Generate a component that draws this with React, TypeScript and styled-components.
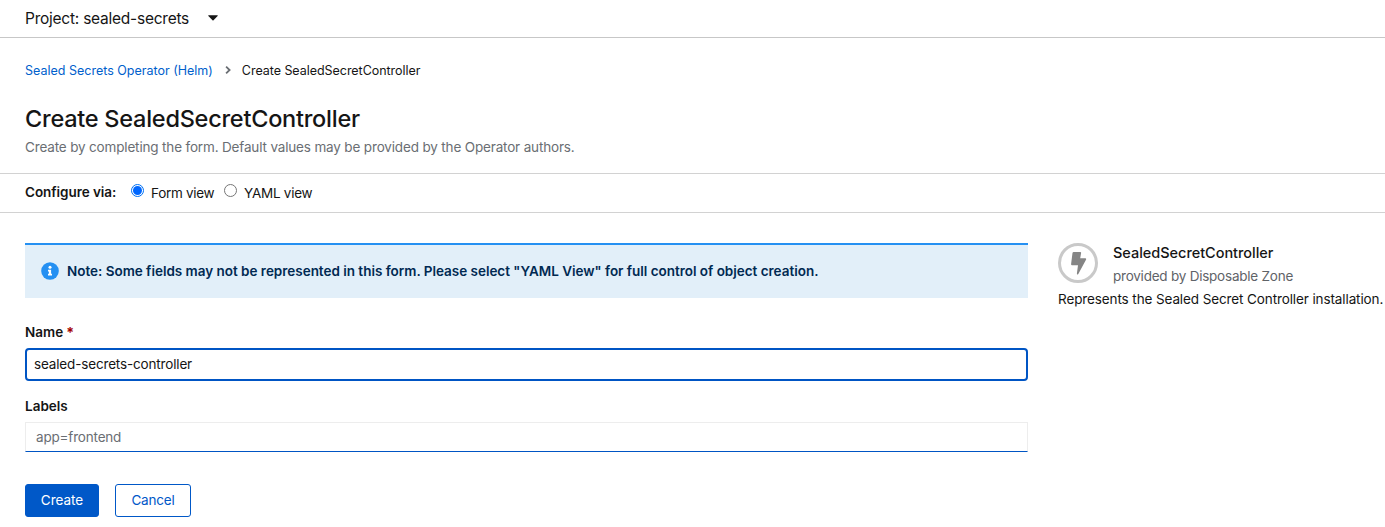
import React from 'react';
import styled, { createGlobalStyle } from 'styled-components';

const GlobalStyle = createGlobalStyle`
  * { box-sizing: border-box; }
  body {
    margin: 0;
    background: #fff;
    color: #151515;
    font-family: Inter, "Liberation Sans", sans-serif;
    font-size: 13.5px;
    line-height: 21px;
    overflow: hidden;
  }
`;

const Page = styled.div`
  height: 527px;
  overflow: hidden;
`;

const ProjectBar = styled.div`
  display: flex;
  align-items: center;
  gap: 19px;
  height: 38px;
  padding: 0 25px 1px;
  border-bottom: 1px solid #c7c7c7;
`;

const Text = styled.span<{ $ls?: number }>`
  white-space: nowrap;
  letter-spacing: ${(p) => p.$ls ?? 0}px;
`;

const ProjectName = styled(Text)`
  font-size: 15.5px;
`;

const Header = styled.header`
  height: 136px;
  padding: 22px 25px 0;
  border-bottom: 1px solid #d2d2d2;
`;

const Breadcrumb = styled.nav`
  display: flex;
  align-items: center;
  height: 20px;
  font-size: 12.5px;
`;

const CrumbLink = styled(Text)`
  color: #0060cc;
`;

const Chevron = styled.svg`
  margin: 0 11px 0 12px;
`;

const Title = styled.h1<{ $ls: number }>`
  margin: 23px 0 0;
  font-size: 23.5px;
  line-height: 31px;
  font-weight: 500;
  letter-spacing: ${(p) => p.$ls}px;
`;

const Subtitle = styled(Text)`
  display: block;
  margin-top: 3px;
  color: #6a6e73;
`;

const ViewSwitch = styled.div`
  display: flex;
  align-items: center;
  height: 39px;
  padding: 0 25px 2px;
  border-bottom: 1px solid #d2d2d2;
`;

const Strong = styled(Text)`
  font-weight: 600;
`;

const SwitchLabel = styled(Strong)`
  width: 106px;
`;

const Option = styled.label<{ $width: number }>`
  display: flex;
  align-items: center;
  gap: 7px;
  width: ${(p) => p.$width}px;
  padding-top: 3px;
`;

const Radio = styled.span<{ $checked?: boolean }>`
  flex: none;
  display: flex;
  align-items: center;
  justify-content: center;
  width: 13px;
  height: 13px;
  margin-bottom: 7px;
  border: 1px solid ${(p) => (p.$checked ? '#0071f2' : '#767676')};
  border-radius: 50%;
  &::after {
    content: '';
    width: 9px;
    height: 9px;
    border-radius: 50%;
    background: ${(p) => (p.$checked ? '#0067ff' : 'transparent')};
  }
`;

const Content = styled.main`
  display: flex;
  gap: 30px;
  padding: 30px 0 0 25px;
`;

const Form = styled.form`
  flex: none;
  width: 1003px;
`;

const Alert = styled.div`
  display: flex;
  align-items: flex-start;
  gap: 8px;
  height: 55px;
  padding: 16px 16px 0;
  border-top: 2px solid #2590f2;
  background: #e2eff9;
  color: #002952;
`;

const InfoIcon = styled.svg`
  margin-top: 1px;
`;

const FieldLabel = styled.div<{ $top: number }>`
  display: flex;
  gap: 3px;
  margin: ${(p) => p.$top}px 0 5px;
`;

const Required = styled.span`
  color: #a30000;
  font-size: 14px;
  font-weight: 700;
`;

const NameInput = styled.div`
  display: flex;
  align-items: center;
  height: 33px;
  padding: 0 7px;
  border: 2px solid #0055c4;
  border-radius: 4px;
`;

const LabelsInput = styled.div`
  display: flex;
  align-items: center;
  height: 30px;
  padding: 1px 10px 0;
  border: 1px solid #ededed;
  border-bottom-color: #0055c4;
  color: #6a6e73;
`;

const Actions = styled.div`
  display: flex;
  gap: 16px;
  margin-top: 32px;
`;

const Button = styled.button<{ $primary?: boolean; $width: number }>`
  width: ${(p) => p.$width}px;
  height: 33px;
  padding: 0;
  border: 1px solid #0058c8;
  border-radius: 3px;
  background: ${(p) => (p.$primary ? '#0058c8' : '#fff')};
  color: ${(p) => (p.$primary ? '#fff' : '#0058c8')};
  font: inherit;
`;

const Aside = styled.aside`
  flex: none;
  width: 327px;
`;

const Provider = styled.div`
  display: flex;
  gap: 15px;
  height: 46px;
`;

const ProviderText = styled.div`
  display: flex;
  flex-direction: column;
  margin-top: -1px;
`;

const KindName = styled(Text)`
  height: 24px;
  font-size: 14.5px;
  font-weight: 500;
`;

const ProvidedBy = styled(Text)`
  color: #5f6368;
`;

export default function App() {
  return (
    <Page>
      <GlobalStyle />
      <ProjectBar>
        <ProjectName $ls={-0.24}>Project: sealed-secrets</ProjectName>
        <svg width="10" height="6" viewBox="0 0 10 6">
          <path d="M.7.3h8.6q.8 0 .3.7L5.5 5.2q-.5.4-1 0L.4 1Q-.1.3.7.3z" fill="#151515" />
        </svg>
      </ProjectBar>
      <Header>
        <Breadcrumb>
          <CrumbLink>Sealed Secrets Operator (Helm)</CrumbLink>
          <Chevron width="6" height="8" viewBox="0 0 6 8">
            <path d="M1.1.7 4.6 4 1.1 7.3" fill="none" stroke="#6a6e73" strokeWidth="1.8" />
          </Chevron>
          <Text $ls={-0.04}>Create SealedSecretController</Text>
        </Breadcrumb>
        <Title $ls={-0.25}>Create SealedSecretController</Title>
        <Subtitle $ls={-0.16}>Create by completing the form. Default values may be provided by the Operator authors.</Subtitle>
      </Header>
      <ViewSwitch>
        <SwitchLabel $ls={-0.05}>Configure via:</SwitchLabel>
        <Option $width={93}>
          <Radio $checked />
          <Text $ls={-0.3}>Form view</Text>
        </Option>
        <Option $width={93}>
          <Radio />
          <Text $ls={-0.25}>YAML view</Text>
        </Option>
      </ViewSwitch>
      <Content>
        <Form>
          <Alert>
            <InfoIcon width="18" height="18" viewBox="0 0 18 18">
              <circle cx="9" cy="9" r="8.8" fill="#2590f2" />
              <circle cx="9" cy="5.3" r="1.5" fill="#fff" />
              <path d="M7 7.7h3.1v4h.9v1.7H7v-1.7h.9V9.4H7z" fill="#fff" />
            </InfoIcon>
            <Strong $ls={-0.02}>Note: Some fields may not be represented in this form. Please select "YAML View" for full control of object creation.</Strong>
          </Alert>
          <FieldLabel $top={24}>
            <Strong>Name</Strong>
            <Required>*</Required>
          </FieldLabel>
          <NameInput>
            <Text $ls={-0.16}>sealed-secrets-controller</Text>
          </NameInput>
          <FieldLabel $top={15}>
            <Strong>Labels</Strong>
          </FieldLabel>
          <LabelsInput>
            <Text $ls={-0.18}>app=frontend</Text>
          </LabelsInput>
          <Actions>
            <Button type="button" $primary $width={74}>
              <Text>Create</Text>
            </Button>
            <Button type="button" $width={76}>
              <Text $ls={-0.2}>Cancel</Text>
            </Button>
          </Actions>
        </Form>
        <Aside>
          <Provider>
            <svg width="40" height="40" viewBox="0 0 40 40">
              <circle cx="20" cy="20" r="18.5" fill="#fff" stroke="#c9c9c9" strokeWidth="3" />
              <path d="M15.7 9h6.6q1 0 .8 1l-.9 5.3h5.1q1.3.2.7 1.4l-7.7 14.300q-1.300 1.200-1.400-.4l1.100-8.400h-6q-1-.2-.9-1.200l1.400-11.100q.2-.9 1.200-.9z" fill="#858585" />
            </svg>
            <ProviderText>
              <KindName $ls={-0.03}>SealedSecretController</KindName>
              <ProvidedBy $ls={-0.23}>provided by Disposable Zone</ProvidedBy>
            </ProviderText>
          </Provider>
          <Text $ls={-0.11}>Represents the Sealed Secret Controller installation.</Text>
        </Aside>
      </Content>
    </Page>
  );
}
